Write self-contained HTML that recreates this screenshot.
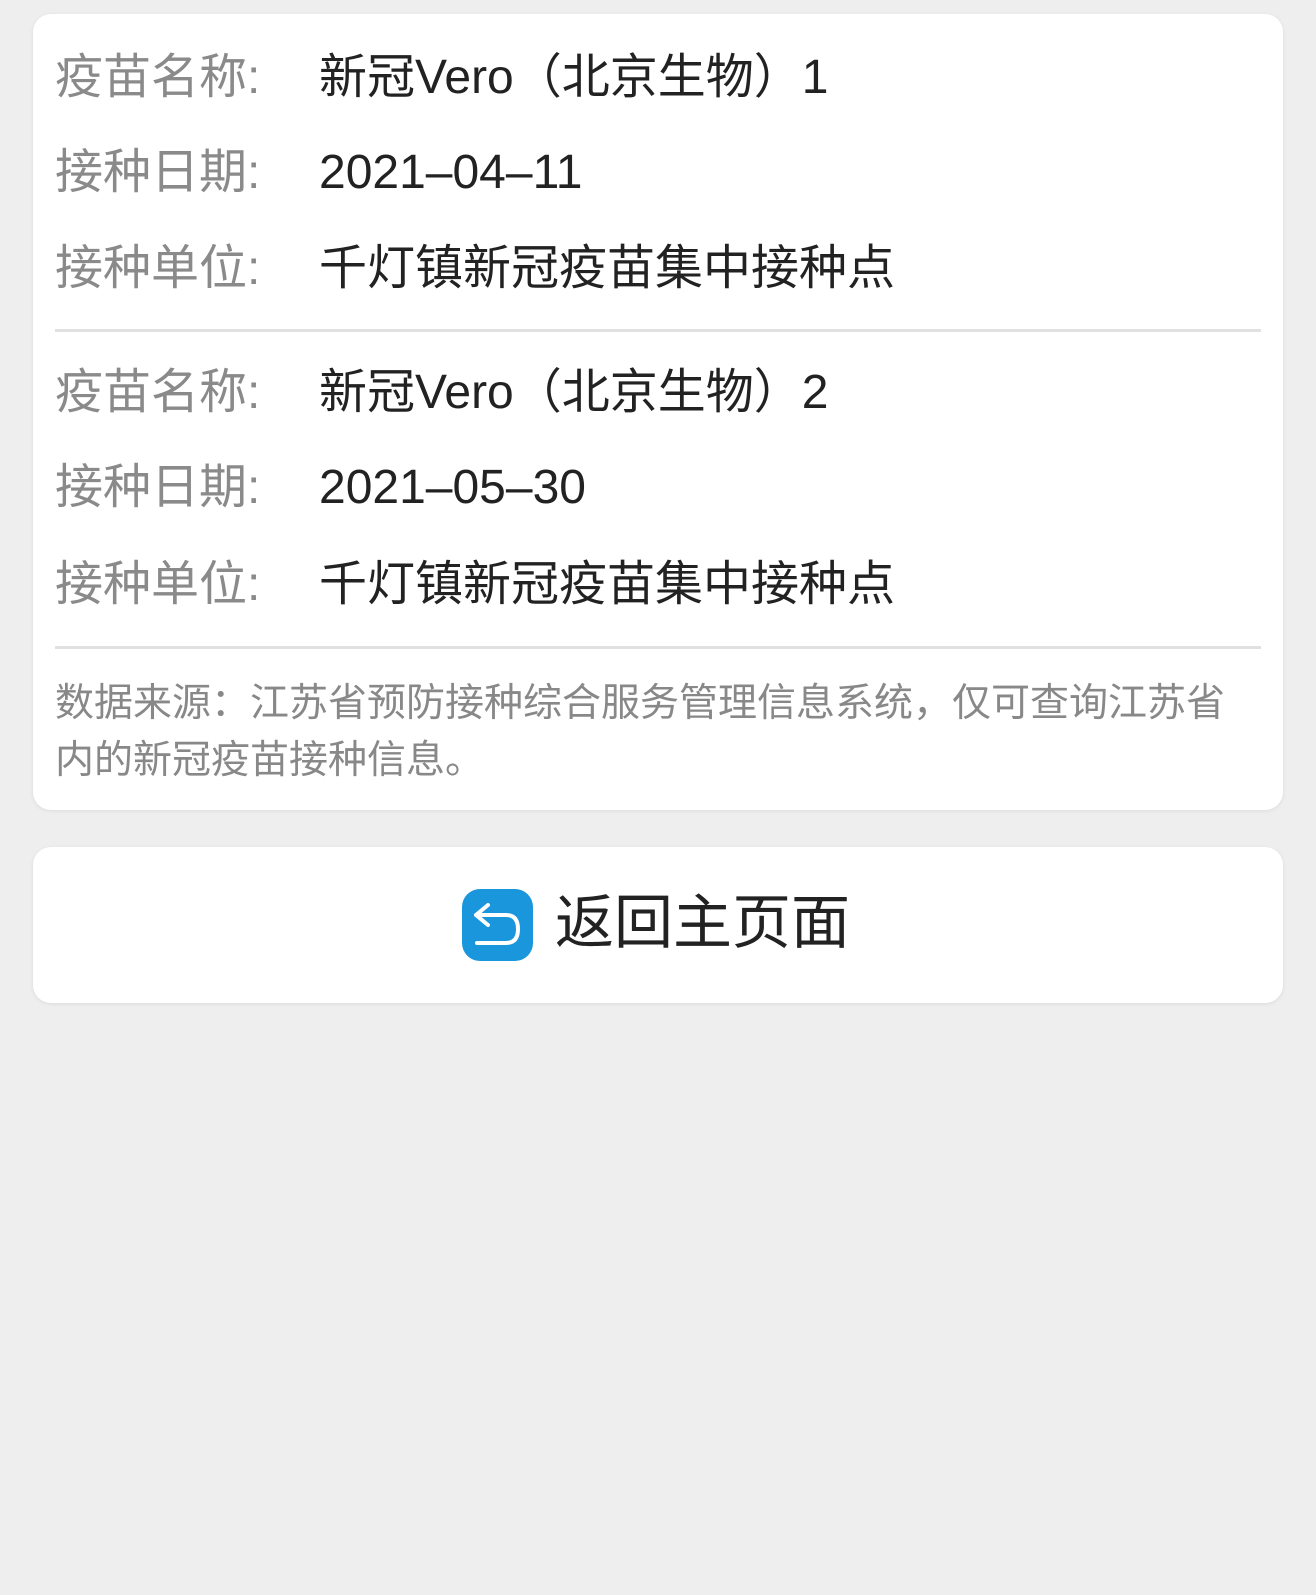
<!DOCTYPE html>
<html><head><meta charset="utf-8"><style>
body{margin:0;width:1316px;height:1595px;background:#eeeeee;font-family:"Liberation Sans","Noto Sans CJK SC",sans-serif;position:relative;overflow:hidden}
.card{position:absolute;left:33px;width:1250px;background:#fff;border-radius:18px;box-shadow:0 1px 4px rgba(0,0,0,0.08)}
.row{position:absolute;left:22px;font-size:48px;line-height:60px;white-space:nowrap}
.l{color:#8a8a8a;display:inline-block;width:264px}
.v{color:#222}
.hr{position:absolute;left:22px;right:22px;height:3px;background:#e0e0e0}
.foot{position:absolute;left:22px;width:1220px;font-size:39px;line-height:57px;color:#888;white-space:nowrap}
</style></head><body>
<div class="card" style="top:14px;height:796px">
<div class="row" style="top:34px"><span class="l">疫苗名称:</span><span class="v">新冠Vero（北京生物）1</span></div>
<div class="row" style="top:129px"><span class="l">接种日期:</span><span class="v">2021–04–11</span></div>
<div class="row" style="top:225px"><span class="l">接种单位:</span><span class="v">千灯镇新冠疫苗集中接种点</span></div>
<div class="hr" style="top:315px"></div>
<div class="row" style="top:349px"><span class="l">疫苗名称:</span><span class="v">新冠Vero（北京生物）2</span></div>
<div class="row" style="top:444px"><span class="l">接种日期:</span><span class="v">2021–05–30</span></div>
<div class="row" style="top:541px"><span class="l">接种单位:</span><span class="v">千灯镇新冠疫苗集中接种点</span></div>
<div class="hr" style="top:632px"></div>
<div class="foot" style="top:661px">数据来源：江苏省预防接种综合服务管理信息系统，仅可查询江苏省<br>内的新冠疫苗接种信息。</div>
</div>
<div class="card" style="top:847px;height:156px"></div>
<svg style="position:absolute;left:462px;top:889px" width="71" height="72" viewBox="0 0 71 72">
<rect x="0" y="0" width="71" height="72" rx="18" fill="#1a96dc"/>
<path d="M26 16 L14 26 L26 36 M14 26 H44 Q56 26 56 40 Q56 54 44 54 H15" fill="none" stroke="#fff" stroke-width="4" stroke-linecap="round" stroke-linejoin="round"/>
</svg>
<div style="position:absolute;left:555px;top:888px;font-size:59px;line-height:70px;color:#222">返回主页面</div>
</body></html>
